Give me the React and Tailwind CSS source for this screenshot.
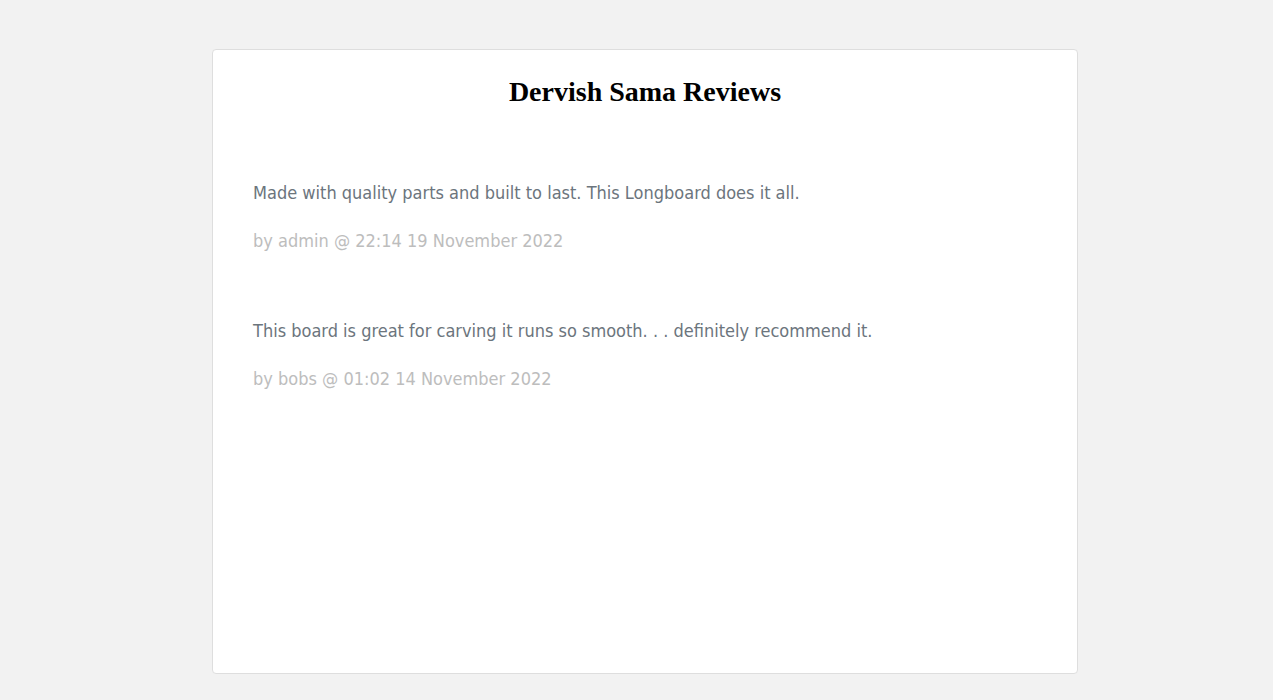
import React from "react";

const reviews = [
  {
    id: 1,
    body: "Made with quality parts and built to last. This Longboard does it all.",
    author: "admin",
    when: "22:14 19 November 2022",
  },
  {
    id: 2,
    body: "This board is great for carving it runs so smooth. . . definitely recommend it.",
    author: "bobs",
    when: "01:02 14 November 2022",
  },
];

const App = () => {
  return (
    <div className="min-h-screen bg-[#f2f2f2] pt-[49px] pb-[26px]">
      <div className="ml-[212px] w-[866px] h-[625px] bg-white border border-[#dedede] rounded-[4px] px-10 pt-[24px]">
        <h1 className="text-center text-[28px] font-bold text-black font-['Liberation_Serif',serif] leading-[36px]">
          Dervish Sama Reviews
        </h1>

        {/* review list */}
        <div className="mt-[71px] flex flex-col gap-[66px] font-['DejaVu_Sans_Condensed','DejaVu_Sans',sans-serif] text-[18px]">
          {reviews.map((r) => (
            <div key={r.id} className="flex flex-col gap-[24px]">
              <p className="text-[#6c757d] leading-[24px]">{r.body}</p>
              <p className="text-[#bdbdbd] leading-[24px]">
                by {r.author} @ {r.when}
              </p>
            </div>
          ))}
        </div>
      </div>
    </div>
  );
};

export default App;
